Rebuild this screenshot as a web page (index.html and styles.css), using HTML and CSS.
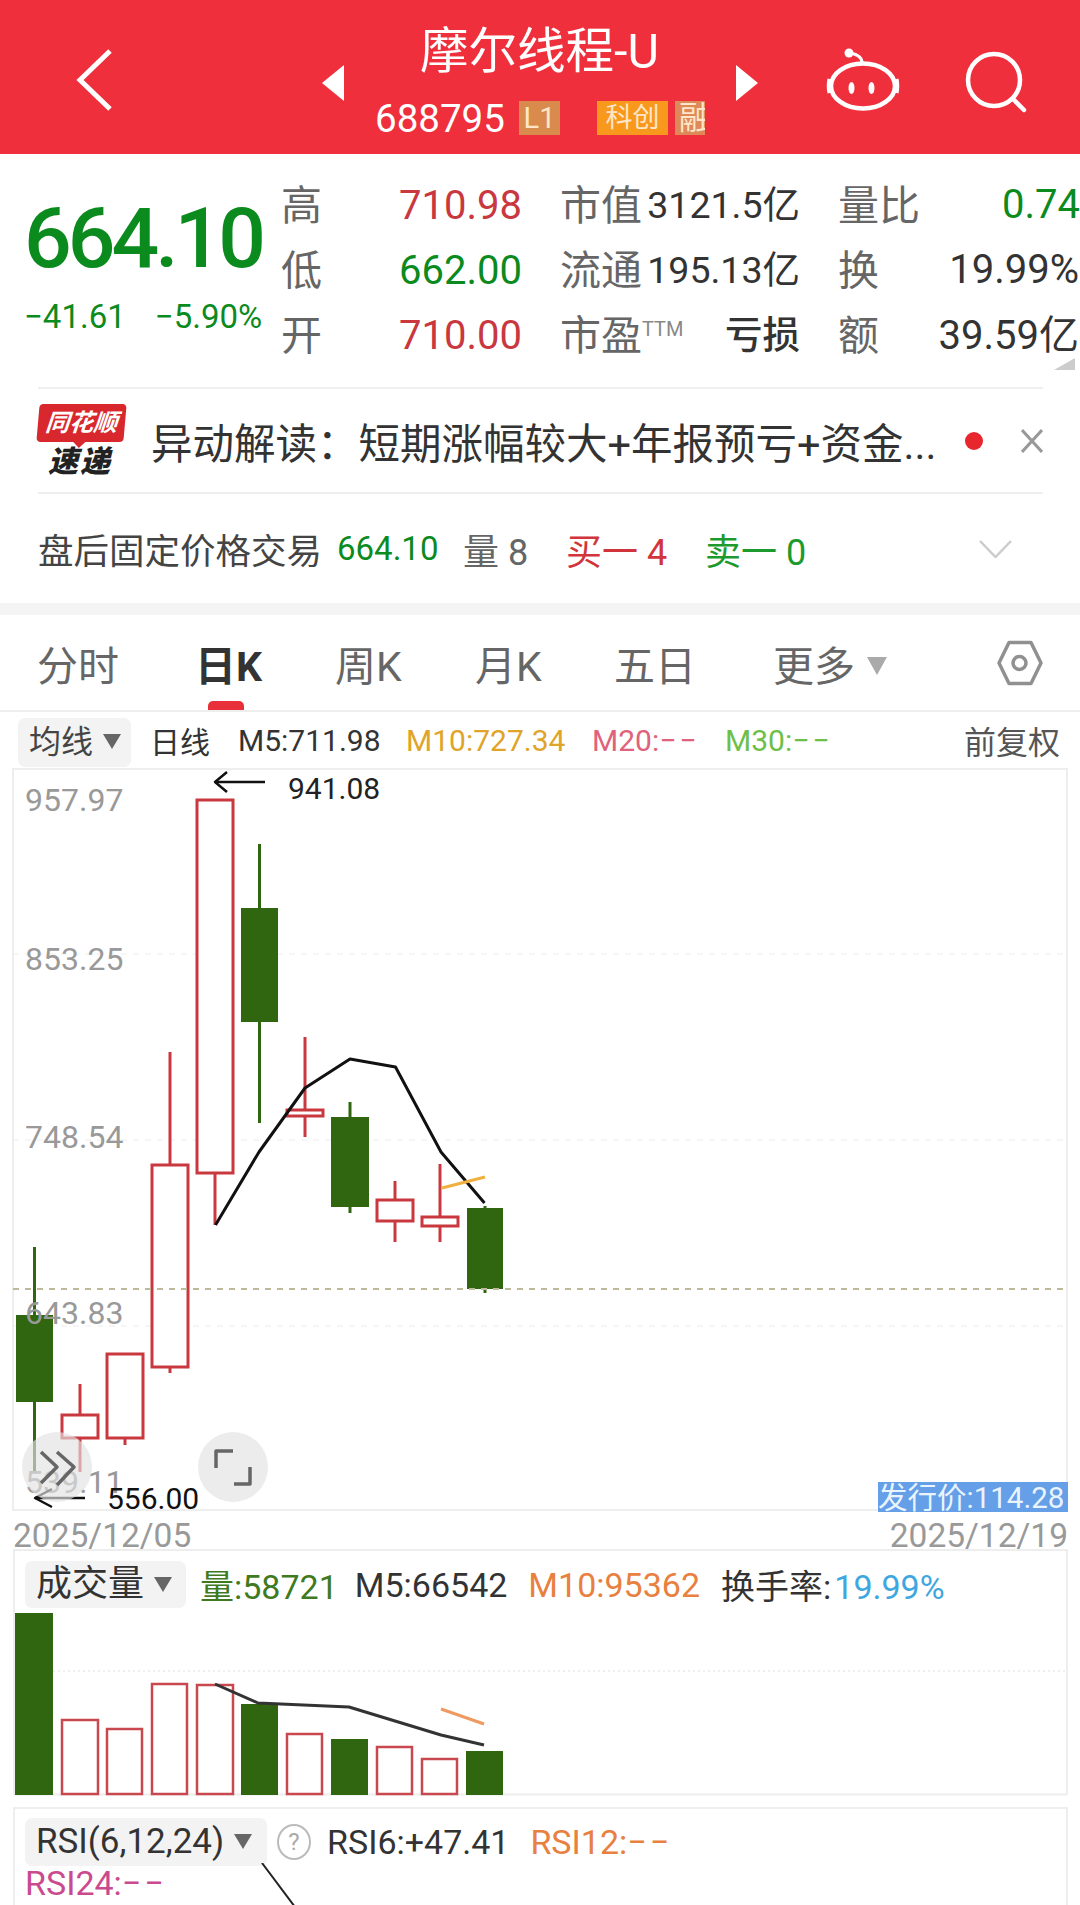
FILE: index.html
```html
<!DOCTYPE html>
<html lang="zh-CN">
<head>
    <meta charset="UTF-8">
    <title>摩尔线程-U</title>
    <link rel="stylesheet" href="styles.css">
</head>
<body>

    <header class="topbar">
        <svg class="back-icon" width="37" height="64" viewBox="0 0 37 64"><path d="M34 3 L4 32 L34 61" fill="none" stroke="#fff" stroke-width="5"/></svg>
        <svg class="prev-icon" width="22" height="36" viewBox="0 0 22 36"><path d="M22 0 L0 18 L22 36 Z" fill="#fff"/></svg>
        <div class="title-box">
            <div class="stock-name">摩尔线程-U</div>
            <div class="stock-code">
                <span class="code-num">688795</span>
                <span class="tag tag-l1">L1</span>
                <span class="tag tag-ke">科创</span>
                <span class="tag tag-rong">融</span>
            </div>
        </div>
        <svg class="next-icon" width="22" height="36" viewBox="0 0 22 36"><path d="M0 0 L22 18 L0 36 Z" fill="#fff"/></svg>
        <svg class="robot-icon" width="74" height="66" viewBox="0 0 74 66">
            <ellipse cx="37" cy="41" rx="32" ry="22.5" fill="none" stroke="#fff" stroke-width="4.5"/>
            <path d="M3.5 34 Q2 41 3.5 48 M70.5 34 Q72 41 70.5 48" fill="none" stroke="#fff" stroke-width="4"/>
            <path d="M36 18 Q36 10 24 8" fill="none" stroke="#fff" stroke-width="3"/>
            <circle cx="23" cy="8" r="4.5" fill="#fff"/>
            <ellipse cx="25.5" cy="43" rx="3" ry="6" fill="#fff"/>
            <ellipse cx="45.5" cy="43" rx="3" ry="6" fill="#fff"/>
        </svg>
        <svg class="search-icon" width="64" height="64" viewBox="0 0 64 64">
            <circle cx="30" cy="30" r="26" fill="none" stroke="#fff" stroke-width="4.5"/>
            <path d="M49 49 L60 60" fill="none" stroke="#fff" stroke-width="4.5" stroke-linecap="round"/>
        </svg>
    </header>

    <section class="quote">
        <div class="price-box">
            <div class="price">664.10</div>
            <div class="change"><span>−41.61</span><span>−5.90%</span></div>
        </div>
        <div class="stats">
            <span class="lab">高</span><span class="val red">710.98</span>
            <span class="lab">市值</span><span class="num">3121.5亿</span>
            <span class="lab">量比</span><span class="num2 digits green">0.74</span>

            <span class="lab">低</span><span class="val green">662.00</span>
            <span class="lab">流通</span><span class="num">195.13亿</span>
            <span class="lab">换</span><span class="num2 digits">19.99%</span>

            <span class="lab">开</span><span class="val red">710.00</span>
            <span class="lab">市盈<sup class="ttm">TTM</sup></span><span class="num loss">亏损</span>
            <span class="lab">额</span><span class="num2">39.59亿</span>
        </div>
        <div class="corner"></div>
    </section>

    <section class="notice">
        <div class="ths-logo">
            <div class="ths-bubble">同花顺</div>
            <div class="ths-sub">速递</div>
        </div>
        <div class="notice-text">异动解读：短期涨幅较大+年报预亏+资金...</div>
        <div class="red-dot"></div>
        <svg class="close-icon" width="22" height="24" viewBox="0 0 22 24"><path d="M1 1 L21 23 M21 1 L1 23" fill="none" stroke="#999" stroke-width="3"/></svg>
    </section>

    <section class="after-hours">
        <span class="ah-title">盘后固定价格交易</span>
        <span class="ah-price green">664.10</span>
        <span class="ah-vol">量 8</span>
        <span class="ah-buy">买一 4</span>
        <span class="ah-sell">卖一 0</span>
        <svg class="ah-arrow" width="33" height="18" viewBox="0 0 33 18"><path d="M1 1 L16.5 17 L32 1" fill="none" stroke="#ccc" stroke-width="2.5"/></svg>
    </section>

    <div class="band"></div>

    <nav class="tabs">
        <span class="tab tab-fs">分时</span>
        <span class="tab tab-day">日K</span>
        <span class="tab tab-week">周K</span>
        <span class="tab tab-month">月K</span>
        <span class="tab tab-five">五日</span>
        <span class="tab tab-more">更多<i class="tri tri-more"></i></span>
        <svg class="hex-icon" width="46" height="46" viewBox="0 0 46 46">
            <path d="M12 2.5 L34 2.5 L44 23 L34 43.5 L12 43.5 L2 23 Z" fill="none" stroke="#909090" stroke-width="3.5" stroke-linejoin="round"/>
            <circle cx="22.5" cy="23" r="6.5" fill="none" stroke="#909090" stroke-width="3.5"/>
        </svg>
    </nav>

    <div class="ma-row">
        <span class="pill pill-ma">均线<i class="tri"></i></span>
        <span class="ma-day">日线</span>
        <span class="ma ma5">M5:711.98</span>
        <span class="ma ma10">M10:727.34</span>
        <span class="ma ma20">M20:<span class="dash">−−</span></span>
        <span class="ma ma30">M30:<span class="dash">−−</span></span>
        <span class="ma-right">前复权</span>
    </div>

    <!-- candles are drawn from data in chart.js -->
    <svg id="kline" class="kline" width="1080" height="752" viewBox="0 768 1080 752"></svg>

    <div class="dates"><span>2025/12/05</span><span>2025/12/19</span></div>

    <div class="vol-head">
        <span class="pill pill-vol">成交量<i class="tri"></i></span>
        <span class="vh vh-green">量:58721</span>
        <span class="vh">M5:66542</span>
        <span class="vh vh-orange">M10:95362</span>
        <span class="vh">换手率:<b class="vh-blue">19.99%</b></span>
    </div>

    <svg id="volume" class="volume" width="1080" height="186" viewBox="0 1610 1080 186"></svg>

    <section class="rsi">
        <div class="rsi-head">
            <span class="pill pill-rsi">RSI(6,12,24)<i class="tri"></i></span>
            <span class="help">?</span>
            <span class="vh rsi6">RSI6:+47.41</span>
            <span class="vh vh-orange">RSI12:<span class="dash">−−</span></span>
        </div>
        <div class="rsi24">RSI24:<span class="dash">−−</span></div>
        <svg class="rsi-line" width="40" height="44" viewBox="0 0 40 44"><path d="M1 0 L34 44" fill="none" stroke="#222" stroke-width="2"/></svg>
    </section>

    <script src="chart.js"></script>
</body>
</html>
```

FILE: styles.css
```css
* {
    box-sizing: border-box;
}

html, body {
    margin: 0;
    padding: 0;
}

body {
    width: 1080px;
    height: 1905px;
    overflow: hidden;
    background: #fff;
    font-family: Roboto, "Noto Sans CJK SC", sans-serif;
    color: #333;
}

.red { color: #c9373f; }
.green { color: #0b8a1e; }
.dash { letter-spacing: 3px; }

/* top bar */
.topbar {
    position: relative;
    height: 154px;
    background: #ef2f3c;
    color: #fff;
    display: flex;
    padding-left: 76px;
}

.back-icon { margin-top: 48px; }
.prev-icon { margin: 65px 0 0 209px; }

.title-box {
    width: 392px;
    display: flex;
    flex-direction: column;
    align-items: stretch;
}

.stock-name {
    height: 101px;
    padding: 21px 1px 0 0;
    text-align: center;
    font-size: 48.5px;
    line-height: 62px;
}

.stock-code {
    display: flex;
    align-items: center;
    height: 34px;
    padding-left: 31px;
}

.code-num {
    font-size: 38.5px;
    width: 144px;
}

.tag {
    height: 34px;
    font-size: 27px;
    line-height: 34px;
    text-align: center;
    color: #ffe6c8;
    overflow: hidden;
}

.tag-l1 { width: 41px; margin-right: 37px; background: #d98b4e; font-size: 29px; }
.tag-ke { width: 71px; margin-right: 7px; background: #f8991d; }
.tag-rong { width: 30px; background: #dd8a58; text-align: left; padding-left: 4px; font-size: 32px; }

.next-icon { margin-top: 65px; }
.robot-icon { margin: 45px 0 0 68px; }
.search-icon { margin: 50px 0 0 64px; }

/* quote block */
.quote {
    position: relative;
    height: 233px;
    display: flex;
}

.price-box {
    width: 281px;
    padding: 40px 0 0 24px;
}

.price {
    font-size: 84px;
    font-weight: 500;
    line-height: 90px;
    letter-spacing: -4px;
    color: #0b8a1e;
}

.change {
    display: flex;
    gap: 29px;
    margin-top: 13px;
    font-size: 33px;
    line-height: 40px;
    color: #0b8a1e;
}

.stats {
    width: 799px;
    padding-top: 15px;
    display: grid;
    grid-template-columns: 118px 161px 84px 194px 85px 157px;
    grid-auto-rows: 65px;
    align-items: center;
    font-size: 40px;
}

.lab {
    font-size: 41px;
    color: #666;
    white-space: nowrap;
}

.val {
    font-size: 40px;
    padding-top: 7px;
}

.num {
    font-size: 37.5px;
    color: #333;
    text-align: right;
    white-space: nowrap;
    padding-right: 38px;
}

.num2 {
    font-size: 40px;
    color: #333;
    text-align: right;
    white-space: nowrap;
    padding-right: 1px;
}

.num2.digits { padding-top: 6px; }
.num2.green { color: #0b8a1e; padding-right: 0; }
.loss { font-weight: 500; }

.ttm {
    font-size: 20px;
    color: #888;
    vertical-align: 14px;
    line-height: 0;
}

.corner {
    position: absolute;
    right: 5px;
    top: 204px;
    width: 0;
    height: 0;
    border-style: solid;
    border-width: 0 0 12px 21px;
    border-color: transparent transparent #ccc transparent;
}

/* notice row */
.notice {
    height: 107px;
    margin: 0 37px 0 38px;
    border-top: 2px solid #efefef;
    border-bottom: 2px solid #efefef;
    display: flex;
    align-items: center;
}

.ths-logo {
    width: 113px;
    flex: none;
}

.ths-bubble {
    position: relative;
    width: 87px;
    height: 38px;
    background: #d8282e;
    border-radius: 4px;
    color: #fff;
    font-size: 24px;
    font-weight: 700;
    font-style: italic;
    line-height: 38px;
    text-align: center;
    transform: skewX(-5deg);
}

.ths-bubble::after {
    content: "";
    position: absolute;
    left: 37px;
    bottom: -6px;
    border-style: solid;
    border-width: 6px 6px 0 6px;
    border-color: #d8282e transparent transparent transparent;
}

.ths-sub {
    width: 84px;
    margin-top: 5px;
    font-size: 30px;
    font-weight: 900;
    font-style: italic;
    line-height: 30px;
    letter-spacing: 2px;
    text-align: center;
    color: #222;
}

.notice-text {
    width: 814px;
    font-size: 41.5px;
    white-space: nowrap;
    color: #333;
}

.red-dot {
    width: 18px;
    height: 18px;
    border-radius: 50%;
    background: #e8262e;
    flex: none;
    margin-right: 38px;
}

.close-icon { flex: none; }

/* after hours */
.after-hours {
    position: relative;
    height: 109px;
    padding-left: 38px;
    display: flex;
    align-items: center;
    font-size: 36px;
    color: #444;
}

.ah-title { width: 299px; font-size: 35.5px; white-space: nowrap; }
.ah-price { width: 126px; font-size: 33px; }
.ah-vol { width: 103px; color: #666; }
.ah-buy { width: 139px; color: #d2343c; }
.ah-sell { width: 274px; color: #1d9a2e; }
.ah-arrow { flex: none; }

.band {
    height: 12px;
    background: #f4f4f4;
}

/* period tabs */
.tabs {
    position: relative;
    height: 97px;
    border-bottom: 2px solid #eee;
    display: flex;
    align-items: center;
    font-size: 41px;
    color: #666;
    padding-left: 37px;
}

.tab { white-space: nowrap; }
.tab-fs { width: 158px; }
.tab-day { width: 140px; color: #333; font-weight: 700; }
.tab-week { width: 140px; }
.tab-month { width: 139px; }
.tab-five { width: 159px; }
.tab-more { width: 224px; }
.hex-icon { flex: none; }

.tab-day::after {
    content: "";
    position: absolute;
    left: 208px;
    bottom: 0;
    width: 36px;
    height: 9px;
    background: #e8303a;
    border-radius: 5px 5px 0 0;
}

.tri {
    display: inline-block;
    width: 0;
    height: 0;
    border-style: solid;
    border-width: 15px 9px 0 9px;
    border-color: #666 transparent transparent transparent;
    margin-left: 10px;
    vertical-align: 4px;
}

.tri-more {
    border-width: 18px 10px 0 10px;
    border-color: #aaa transparent transparent transparent;
    margin-left: 12px;
    vertical-align: 6px;
}

/* moving average row */
.ma-row {
    height: 56px;
    display: flex;
    align-items: center;
    padding-left: 18px;
    font-size: 30px;
    white-space: nowrap;
    position: relative;
}

.pill {
    background: #f3f3f3;
    border-radius: 7px;
    display: inline-block;
    white-space: nowrap;
}

.pill-ma {
    width: 113px;
    height: 49px;
    margin: 4px 19px 0 0;
    padding-left: 11px;
    font-size: 32px;
    line-height: 49px;
    color: #444;
}

.ma-day { width: 88px; font-size: 30px; color: #333; }
.ma5 { width: 168px; color: #333; }
.ma10 { width: 186px; color: #e0a428; }
.ma20 { width: 133px; color: #e0627c; }
.ma30 { width: 239px; color: #6dbf48; }
.ma-right { color: #555; font-size: 32px; }

/* charts */
.kline, .volume {
    display: block;
}

.dates {
    height: 48px;
    margin-top: -8px;
    display: flex;
    justify-content: space-between;
    padding: 0 12px 0 13px;
    font-size: 33.5px;
    line-height: 48px;
    color: #999;
}

.vol-head {
    height: 61px;
    margin: -11px 12px 0 13px;
    display: flex;
    align-items: center;
    padding-left: 10px;
    border-top: 2px solid #eee;
    border-left: 2px solid #eee;
    border-right: 2px solid #eee;
    white-space: nowrap;
}

.pill-vol {
    width: 161px;
    height: 47px;
    margin-top: 8px;
    margin-right: 14px;
    padding-left: 11px;
    font-size: 36px;
    line-height: 47px;
    color: #333;
}

.vh {
    font-size: 34px;
    color: #333;
    margin-right: 21px;
    margin-top: 8px;
}

.vh-green { color: #3f7a1e; margin-right: 17px; }
.vh-orange { color: #e8803f; }
.vh-blue { color: #3fa7e0; font-weight: 400; margin-left: 3px; }

/* rsi */
.rsi {
    position: relative;
    margin: 11px 12px 0 13px;
    height: 98px;
    border-top: 2px solid #eee;
    border-left: 2px solid #eee;
    border-right: 2px solid #eee;
}

.rsi-head {
    display: flex;
    align-items: center;
    height: 56px;
    padding: 9px 0 0 10px;
}

.pill-rsi {
    width: 242px;
    height: 48px;
    padding-left: 11px;
    font-size: 35px;
    line-height: 48px;
    color: #333;
}

.help {
    width: 34px;
    height: 36px;
    margin: 0 16px 0 10px;
    border: 2px solid #bbb;
    border-radius: 50%;
    color: #aaa;
    font-size: 24px;
    line-height: 32px;
    text-align: center;
}

.rsi .vh { margin-top: 0; }

.rsi24 {
    padding-left: 10px;
    font-size: 34px;
    line-height: 36px;
    color: #c94a8f;
}

.rsi-line {
    position: absolute;
    left: 246px;
    top: 54px;
}
```

FILE: chart.js
```js
const SVG_NS = 'http://www.w3.org/2000/svg';
const RED = '#c9383f';
const GREEN = '#2f660f';

// x, width, body top, body bottom, wick top, wick bottom, up
const candles = [
    [16, 37, 1315, 1402, 1247, 1473, false],
    [61, 38, 1414, 1439, 1384, 1472, true],
    [106, 38, 1353, 1439, 1353, 1445, true],
    [151, 38, 1164, 1368, 1052, 1373, true],
    [196, 38, 799, 1174, 799, 1225, true],
    [241, 37, 908, 1022, 844, 1123, false],
    [286, 38, 1109, 1117, 1037, 1137, true],
    [331, 38, 1117, 1207, 1102, 1213, false],
    [376, 38, 1199, 1222, 1181, 1242, true],
    [421, 38, 1216, 1227, 1164, 1242, true],
    [467, 36, 1208, 1289, 1206, 1293, false]
];

// x, width, top
const volumes = [
    [15, 38, 1613, false],
    [61, 38, 1719, true],
    [106, 37, 1728, true],
    [151, 37, 1683, true],
    [196, 38, 1684, true],
    [241, 37, 1704, false],
    [286, 37, 1733, true],
    [331, 37, 1739, false],
    [376, 37, 1746, true],
    [421, 37, 1758, true],
    [466, 37, 1751, false]
];

function add(parent, tag, attrs, text) {
    const el = document.createElementNS(SVG_NS, tag);
    Object.keys(attrs).forEach(key => el.setAttribute(key, attrs[key]));
    if (text) {
        el.textContent = text;
    }
    parent.appendChild(el);
    return el;
}

function line(parent, x1, y1, x2, y2, stroke, width, dash) {
    const attrs = { x1, y1, x2, y2, stroke, 'stroke-width': width };
    if (dash) {
        attrs['stroke-dasharray'] = dash;
    }
    return add(parent, 'line', attrs);
}

function polyline(parent, points, stroke, width) {
    return add(parent, 'polyline', { points, stroke, fill: 'none', 'stroke-width': width, 'stroke-linejoin': 'round' });
}

function drawKline() {
    const svg = document.getElementById('kline');

    add(svg, 'rect', { x: 13, y: 769, width: 1054, height: 741, fill: 'none', stroke: '#eee', 'stroke-width': 2 });
    [954, 1140, 1326].forEach(y => line(svg, 13, y, 1067, y, '#ececec', 1, '6 6'));

    candles.forEach(([x, w, top, bottom, wickTop, wickBottom, up]) => {
        const color = up ? RED : GREEN;
        const mid = x + w / 2;
        line(svg, mid, wickTop, mid, top, color, 3);
        line(svg, mid, bottom, mid, wickBottom, color, 3);
        if (up) {
            add(svg, 'rect', { x: x + 1, y: top + 1, width: w - 2, height: bottom - top - 2, fill: '#fff', stroke: color, 'stroke-width': 3 });
        } else {
            add(svg, 'rect', { x, y: top, width: w, height: bottom - top, fill: color });
        }
    });

    line(svg, 13, 1289, 1067, 1289, '#bdb99a', 2, '6 6');

    polyline(svg, '215.5,1225 259,1152 305,1088 350,1059 395.5,1067 441,1152 484.5,1203', '#111', 3);
    line(svg, 442, 1188, 485, 1177, '#f0b040', 3);

    const labels = [[800, '957.97'], [959, '853.25'], [1137, '748.54'], [1313, '643.83'], [1482, '539.11']];
    labels.forEach(([y, text]) => {
        add(svg, 'text', { x: 25, y: y + 11, 'font-size': 32, fill: '#999' }, text);
    });

    // high / low markers
    polyline(svg, '227,772 215,782 227,792', '#111', 2.5);
    line(svg, 215, 782, 265, 782, '#111', 2.5);
    add(svg, 'text', { x: 288, y: 799, 'font-size': 30, fill: '#222' }, '941.08');

    polyline(svg, '52,1507 35,1498 52,1489', '#111', 2.5);
    line(svg, 35, 1498, 85, 1498, '#111', 2.5);
    add(svg, 'text', { x: 107, y: 1509, 'font-size': 30, fill: '#111' }, '556.00');

    // round buttons over the chart
    add(svg, 'circle', { cx: 57, cy: 1467, r: 35, fill: 'rgba(226,226,226,0.65)' });
    add(svg, 'circle', { cx: 233, cy: 1467, r: 35, fill: 'rgba(226,226,226,0.65)' });
    polyline(svg, '41,1452 57,1467 41,1483', '#666', 3.5);
    polyline(svg, '57,1452 74,1467 57,1485', '#666', 3.5);
    polyline(svg, '216,1468 216,1451 233,1451', '#666', 3.5);
    polyline(svg, '250,1467 250,1484 234,1484', '#666', 3.5);

    add(svg, 'rect', { x: 878, y: 1482, width: 190, height: 30, fill: '#649fe8' });
    add(svg, 'text', { x: 878, y: 1508, 'font-size': 29.5, fill: '#eaf4ff' }, '发行价:114.28');
}

function drawVolume() {
    const svg = document.getElementById('volume');

    line(svg, 13, 1794.5, 1067, 1794.5, '#eee', 2);
    line(svg, 14, 1610, 14, 1795, '#eee', 2);
    line(svg, 1067, 1610, 1067, 1795, '#eee', 2);
    line(svg, 53, 1671, 1067, 1671, '#ddd', 1, '2 3');

    volumes.forEach(([x, w, top, up]) => {
        if (up) {
            add(svg, 'rect', { x: x + 1, y: top + 1, width: w - 2, height: 1794 - top - 1, fill: '#fff', stroke: '#c9474f', 'stroke-width': 2.5 });
        } else {
            add(svg, 'rect', { x, y: top, width: w, height: 1795 - top, fill: GREEN });
        }
    });

    polyline(svg, '215,1684 258,1703 349,1707 441,1735 484,1745', '#333', 3);
    line(svg, 441, 1709, 484, 1724, '#ee9a60', 3);
}

drawKline();
drawVolume();
```
